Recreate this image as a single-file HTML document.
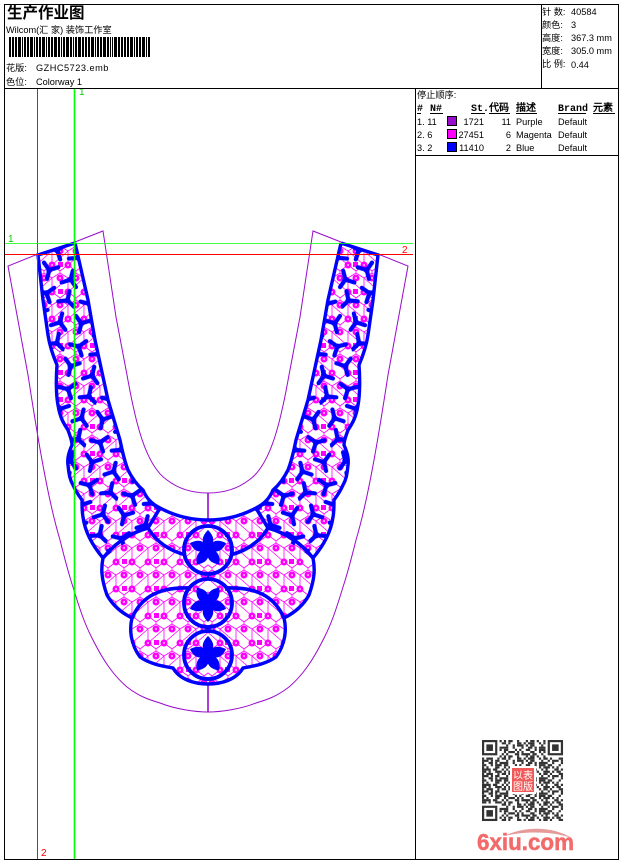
<!DOCTYPE html>
<html><head><meta charset="utf-8"><style>
html,body{margin:0;padding:0;background:#fff;width:620px;height:860px;overflow:hidden}
svg{display:block}
text{font-family:"Liberation Sans","WenQuanYi Zen Hei","Noto Sans CJK SC",sans-serif;font-size:9.2px;fill:#000}
.b{font-family:"Liberation Mono","WenQuanYi Zen Hei",monospace;font-weight:bold;font-size:10px}
</style></head><body>
<svg width="620" height="860" viewBox="0 0 620 860" xmlns="http://www.w3.org/2000/svg">
<defs>
<pattern id="lace" width="32" height="27" patternUnits="userSpaceOnUse" patternTransform="translate(4 2)">
<path d="M0 6L8 1L16 6L24 1L32 6M0 6V20L8 26L16 20V6M16 20L24 26L32 20V6M8 1V-2M24 1V-2M8 26V29M24 26V29M8 13L16 6M8 13L0 20M24 13L16 20M24 13L32 6" fill="none" stroke="#f0f" stroke-width=".8"/>
<g fill="#f0f"><circle cx="8" cy="6" r="3.5"/><circle cx="24" cy="6" r="3.5"/><circle cx="0" cy="20" r="3.5"/><circle cx="16" cy="20" r="3.5"/><circle cx="32" cy="20" r="3.5"/><rect x="22" y="17" width="5" height="5"/></g>
<g fill="#fff"><circle cx="8" cy="6" r=".9"/><circle cx="24" cy="6" r=".9"/><circle cx="16" cy="20" r=".9"/><circle cx="0" cy="20" r=".9"/><circle cx="32" cy="20" r=".9"/></g>
</pattern>
<g id="y0"><path d="M0 0L-7 -6M0 0L8 -5M0 0L0 9" fill="none" stroke="#00f" stroke-width="4.2" stroke-linecap="round"/><circle r="3" fill="#00f"/></g>
<pattern id="ys" width="44" height="44" patternUnits="userSpaceOnUse" patternTransform="translate(42 258) rotate(14)">
<use href="#y0" x="10" y="10"/>
<use href="#y0" transform="translate(33 14) rotate(180)"/>
<use href="#y0" transform="translate(13 33) rotate(90)"/>
<use href="#y0" transform="translate(35 35) rotate(-60)"/>
</pattern>
<clipPath id="c"><path d="M38,255L43,300L48,335C50,348 54,358 57,365C56,378 56,395 58,405C60,418 64,424 68,430C70,436 72,440 72,445C69,452 67,458 68,465C69,475 70,480 73,485C76,492 79,496 82,500C82,506 82,512 83,517C85,532 92,545 103,558C101,568 101,578 107,595C113,606 122,613 132,618C129,630 131,645 140,657C150,664 162,666 173,668C180,680 195,684 208,684V520C190,520 175,516 160,508C150,503 146,497 143,490C137,485 132,478 128,470C124,460 122,450 120,440L108,400L95,340L88,300L75,243Z"/></clipPath>
<clipPath id="s"><path d="M30,240H90L175,505L160,508L148,528L103,558H30Z"/></clipPath>
<path id="pt" d="M0 1C-7 -6 -7 -12 0 -19C7 -12 7 -6 0 1Z"/>
<g id="fl" fill="#00f"><use href="#pt"/><use href="#pt" transform="rotate(72)"/><use href="#pt" transform="rotate(144)"/><use href="#pt" transform="rotate(216)"/><use href="#pt" transform="rotate(288)"/></g>
<g id="L">
<g clip-path="url(#c)"><rect x="30" y="240" width="180" height="450" fill="url(#lace)"/>
<rect x="30" y="240" width="160" height="320" fill="url(#ys)" clip-path="url(#s)"/></g>
<path d="M75,243L38,255L43,300L48,335C50,348 54,358 57,365C56,378 56,395 58,405C60,418 64,424 68,430C70,436 72,440 72,445C69,452 67,458 68,465C69,475 70,480 73,485C76,492 79,496 82,500C82,506 82,512 83,517C85,532 92,545 103,558C101,568 101,578 107,595C113,606 122,613 132,618C129,630 131,645 140,657C150,664 162,666 173,668C180,680 195,684 208,684M208,520C190,520 175,516 160,508C150,503 146,497 143,490C137,485 132,478 128,470C124,460 122,450 120,440L108,400L95,340L88,300L75,243" fill="none" stroke="#00f" stroke-width="3.4"/>
<path d="M160,508L148,528C157,543 170,551 186,555M103,558C115,543 130,533 148,528M132,618C140,600 155,587 188,588" fill="none" stroke="#00f" stroke-width="3.6"/>
</g>
</defs>
<rect width="620" height="860" fill="#fff"/>
<!-- purple outline -->
<g fill="none" stroke="#9a0ccc" stroke-width="1">
<path d="M38,254L8,266L28,375C38,440 48,500 60,540C65,560 68,572 73,587C80,610 85,625 93,640C103,660 113,675 127,687C140,697 150,700 160,703C175,709 195,712 208,712C221,712 241,709 256,703C266,700 276,697 289,687C303,675 313,660 323,640C331,625 336,610 343,587C348,572 351,560 356,540C368,500 378,440 388,375L408,266L378,254"/>
<path d="M75,242L103,231L116,317L127,375C135,420 145,465 167,480C180,490 195,493 208,493C221,493 236,490 249,480C271,465 281,420 289,375L300,317L313,231L341,242"/>
</g>
<path d="M208,493V522M208,684V712" stroke="#9a0ccc" stroke-width="1.6"/>
<!-- embroidery -->
<use href="#L"/>
<use href="#L" transform="matrix(-1 0 0 1 416 0)"/>
<path d="M208,574V579M208,627V631" stroke="#00f" stroke-width="2"/>
<g fill="none" stroke="#00f" stroke-width="3.8"><circle cx="208" cy="550" r="24"/><circle cx="208" cy="603" r="24"/><circle cx="208" cy="655" r="24"/></g>
<use href="#fl" x="208" y="549"/>
<use href="#fl" transform="translate(208 603) rotate(36)"/>
<use href="#fl" x="208" y="655"/>
<!-- guide lines -->
<path d="M37.500,88V859" stroke="#c82020"/>
<path d="M74.500,88V859" stroke="#0f0" stroke-width="1.6"/>
<path d="M4,243.500H413" stroke="#0f0" stroke-width=".8"/>
<path d="M4,254.500H413" stroke="#f00"/>
<text x="79" y="95" style="fill:#0c0;font-size:10px">1</text>
<text x="8" y="242" style="fill:#0c0;font-size:10px">1</text>
<text x="402" y="253" style="fill:#f00;font-size:10px">2</text>
<text x="41" y="856" style="fill:#f00;font-size:10px">2</text>
<!-- frame -->
<path d="M4.500,4.500H618.500V859.500H4.500ZM4.500,88.500H618.500M541.500,4.500V88.500M415.500,88.500V859.500M415.500,155.500H618.500" fill="none" stroke="#000"/>
<!-- header left -->
<text x="7" y="18" style="font-size:15.500px;font-weight:bold">生产作业图</text>
<text x="6" y="33">Wilcom(汇 家) 装饰工作室</text>
<path d="M9,47H151" stroke="#000" stroke-width="20" stroke-dasharray="2 1 2 1 2 1 3 1 1 1 2 1 2 1 3 1 1 1 2 1 2 1 3 1 1 1 2 1 2 1 3 1 2 1 1 1 2 1 3 1 2 1 1 1 2 1 3 1 2 1 2 1 2 1 3 1 1 1 2 1 2 1 3 1 2 1 1 1 1 1 3 1 2 1"/>
<text x="6" y="71">花版:</text><text x="36" y="71" letter-spacing=".5">GZHC5723.emb</text>
<text x="6" y="85">色位:</text><text x="36" y="85">Colorway 1</text>
<!-- header right -->
<text x="542" y="15">针 数:</text><text x="571" y="15">40584</text>
<text x="542" y="28">颜色:</text><text x="571" y="28">3</text>
<text x="542" y="41">高度:</text><text x="571" y="41">367.3 mm</text>
<text x="542" y="54">宽度:</text><text x="571" y="54">305.0 mm</text>
<text x="542" y="67">比 例:</text><text x="571" y="68">0.44</text>
<!-- table -->
<text x="417" y="98">停止顺序:</text>
<text class="b" x="417" y="111">#</text><text class="b" x="430" y="111">N#</text><text class="b" x="471" y="111">St.</text><text class="b" x="489" y="111">代码</text><text class="b" x="516" y="111">描述</text><text class="b" x="558" y="111">Brand</text><text class="b" x="593" y="111">元素</text>
<path d="M417,113.500H421M430,113.500H443M471,113.500H485M489,113.500H510M516,113.500H537M558,113.500H586M593,113.500H615" stroke="#000"/>
<text x="417" y="125">1. 11</text><rect x="447.500" y="116.500" width="9" height="9" fill="#9a0ccc" stroke="#000"/><text x="484" y="125" text-anchor="end">1721</text><text x="511" y="125" text-anchor="end">11</text><text x="516" y="125">Purple</text><text x="558" y="125">Default</text>
<text x="417" y="138">2. 6</text><rect x="447.500" y="129.500" width="9" height="9" fill="#f0f" stroke="#000"/><text x="484" y="138" text-anchor="end">27451</text><text x="511" y="138" text-anchor="end">6</text><text x="516" y="138">Magenta</text><text x="558" y="138">Default</text>
<text x="417" y="151">3. 2</text><rect x="447.500" y="142.500" width="9" height="9" fill="#00f" stroke="#000"/><text x="484" y="151" text-anchor="end">11410</text><text x="511" y="151" text-anchor="end">2</text><text x="516" y="151">Blue</text><text x="558" y="151">Default</text>
<!-- QR -->
<g transform="translate(482 740) scale(2.19)" fill="none" stroke="#333" stroke-width="1">
<path d="M0 .5h37M0 7.500h37M0 14.500h37M0 21.500h37M0 28.500h37M0 35.500h37" stroke-dasharray="2 1 1 2 3 1 1 1 2 2 1 3 1 1"/>
<path d="M0 1.500h37M0 8.500h37M0 15.500h37M0 22.500h37M0 29.500h37M0 36.500h37" stroke-dasharray="1 1 3 2 1 1 2 1 1 3 2 1"/>
<path d="M0 2.500h37M0 9.500h37M0 16.500h37M0 23.500h37M0 30.500h37" stroke-dasharray="3 1 1 1 2 3 1 2 1 1"/>
<path d="M0 3.500h37M0 10.500h37M0 17.500h37M0 24.500h37M0 31.500h37" stroke-dasharray="1 2 2 1 1 1 4 2 1 3"/>
<path d="M0 4.500h37M0 11.500h37M0 18.500h37M0 25.500h37M0 32.500h37" stroke-dasharray="2 2 1 1 3 1 2 3 1 1 1 2"/>
<path d="M0 5.500h37M0 12.500h37M0 19.500h37M0 26.500h37M0 33.500h37" stroke-dasharray="1 1 1 3 2 2 1 1 3 1"/>
<path d="M0 6.500h37M0 13.500h37M0 20.500h37M0 27.500h37M0 34.500h37" stroke-dasharray="4 1 2 2 1 1 1 3 2 1"/>
<g fill="#fff" stroke="none"><rect width="8" height="8"/><rect x="29" width="8" height="8"/><rect y="29" width="8" height="8"/></g>
<g><rect x=".5" y=".5" width="6" height="6"/><rect x="30.500" y=".5" width="6" height="6"/><rect x=".5" y="30.500" width="6" height="6"/></g>
<g fill="#333" stroke="none"><rect x="2" y="2" width="3" height="3"/><rect x="32" y="2" width="3" height="3"/><rect x="2" y="32" width="3" height="3"/></g>
</g>
<rect x="510" y="766" width="26" height="28" fill="#fff"/>
<rect x="512" y="768" width="22" height="24" fill="#f25a5a"/>
<text x="513" y="779" style="fill:#fff;font-size:10px">以</text><text x="523" y="779" style="fill:#fff;font-size:10px">表</text><text x="513" y="790" style="fill:#fff;font-size:10px">图</text><text x="523" y="790" style="fill:#fff;font-size:10px">版</text>
<!-- logo -->
<path d="M504,836C525,826 552,826 572,838C552,831 525,831 504,836Z" fill="#e79a9a"/>
<text x="477" y="850" textLength="97" lengthAdjust="spacingAndGlyphs" style="font-size:23px;font-weight:bold;fill:#f36a6a;stroke:#f36a6a;stroke-width:.5">6xiu.com</text>
</svg>
</body></html>
